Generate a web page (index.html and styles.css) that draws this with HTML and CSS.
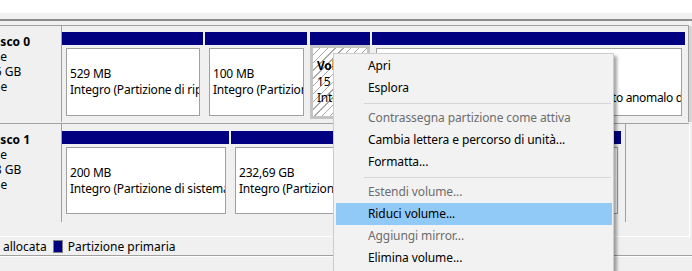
FILE: index.html
```html
<!DOCTYPE html>
<html lang="it">
<head>
    <meta charset="UTF-8">
    <title>Gestione disco</title>
    <link rel="stylesheet" href="styles.css">
</head>
<body>
    <div class="list-pane"></div>
    <div class="splitter"></div>

    <div class="graph">
        <div class="disk disk-0">
            <div class="disk-label">
                <div class="l-name">Disco 0</div>
                <div class="l-type">Base</div>
                <div class="l-size">465,76 GB</div>
                <div class="l-state">Online</div>
            </div>
            <div class="parts">
                <div class="part p-recovery">
                    <div class="part-head"></div>
                    <div class="part-body">
                        <div class="part-box">
                            <div>529 MB</div>
                            <div>Integro (Partizione di ripristino)</div>
                        </div>
                    </div>
                </div>
                <div class="part p-efi">
                    <div class="part-head"></div>
                    <div class="part-body">
                        <div class="part-box">
                            <div>100 MB</div>
                            <div>Integro (Partizione di sistema EFI)</div>
                        </div>
                    </div>
                </div>
                <div class="part p-volume selected">
                    <div class="part-head"></div>
                    <div class="part-body">
                        <div class="part-box">
                            <div class="vol-name">Volume (D:)</div>
                            <div>15 GB NTFS</div>
                            <div>Integro (Partizione primaria)</div>
                        </div>
                    </div>
                </div>
                <div class="part p-system">
                    <div class="part-head"></div>
                    <div class="part-body">
                        <div class="part-box">
                            <div class="vol-name">(C:)</div>
                            <div>450,14 GB NTFS</div>
                            <div>Integro (Avvio, File di paging, Dump di arresto anomalo del sistema)</div>
                        </div>
                    </div>
                </div>
                <div class="edge"></div>
            </div>
        </div>

        <div class="disk disk-1">
            <div class="disk-label">
                <div class="l-name">Disco 1</div>
                <div class="l-type">Base</div>
                <div class="l-size">232,88 GB</div>
                <div class="l-state">Online</div>
            </div>
            <div class="parts parts-short">
                <div class="part p-sysres">
                    <div class="part-head"></div>
                    <div class="part-body">
                        <div class="part-box">
                            <div>200 MB</div>
                            <div>Integro (Partizione di sistema)</div>
                        </div>
                    </div>
                </div>
                <div class="part p-data">
                    <div class="part-head"></div>
                    <div class="part-body">
                        <div class="part-box">
                            <div>232,69 GB</div>
                            <div>Integro (Partizione primaria)</div>
                        </div>
                    </div>
                </div>
            </div>
        </div>
    </div>

    <div class="legend">
        <span class="legend-text l-free">Non allocata</span>
        <span class="swatch"></span>
        <span class="legend-text">Partizione primaria</span>
    </div>
    <div class="status"></div>

    <ul class="menu">
        <li>Apri</li>
        <li>Esplora</li>
        <li class="sep"></li>
        <li class="off">Contrassegna partizione come attiva</li>
        <li>Cambia lettera e percorso di unità...</li>
        <li>Formatta...</li>
        <li class="sep"></li>
        <li class="off">Estendi volume...</li>
        <li class="hot">Riduci volume...</li>
        <li class="off">Aggiungi mirror...</li>
        <li>Elimina volume...</li>
    </ul>
</body>
</html>
```

FILE: styles.css
```css
body {
    margin: 0;
    width: 692px;
    height: 271px;
    overflow: hidden;
    position: relative;
    background-color: #f0f0f0;
    font-family: "Noto Sans", "Open Sans", sans-serif;
    font-size: 12px;
    color: #000;
}

.list-pane {
    height: 13px;
    background: #fff;
}

.splitter {
    height: 6px;
    background: #f0f0f0;
    border-bottom: 2px solid #8c8c8c;
}

.graph {
    padding-top: 4px;
    border-right: 1px solid #fff;
    border-bottom: 1px solid #fff;
    width: 689px;
    height: 211px;
}

.disk {
    display: flex;
    border-top: 1px solid #a0a0a0;
}

.disk-1 {
    margin-top: 1px;
}

.disk-label {
    width: 62px;
    flex-shrink: 0;
    overflow: hidden;
    white-space: nowrap;
    line-height: 15px;
    padding-top: 8px;
    border-right: 1px solid #a0a0a0;
    box-sizing: border-box;
}

.disk-0 .disk-label {
    height: 96px;
}

.disk-1 .disk-label {
    height: 98px;
}

.l-name {
    font-weight: bold;
    margin-left: -12px;
}

.l-type {
    margin-left: -20px;
}

.l-size {
    margin-left: -36px;
}

.l-state {
    margin-left: -30px;
}

.parts {
    display: flex;
    gap: 2px;
    padding: 6px 0 3px;
}

.disk-1 .parts {
    padding-top: 7px;
    padding-bottom: 0;
}

.part {
    display: flex;
    flex-direction: column;
}

.part-head {
    height: 13px;
    background: #000080;
}

.part-body {
    padding: 3px 3px 3px 4px;
    height: 74px;
    box-sizing: border-box;
}

.disk-1 .part-body {
    height: 73px;
}

.part-box {
    height: 100%;
    box-sizing: border-box;
    background: #fff;
    border: 1px solid #a0a0a0;
    padding-left: 3px;
    display: flex;
    flex-direction: column;
    justify-content: center;
    overflow: hidden;
    white-space: nowrap;
    line-height: 16px;
    letter-spacing: -0.2px;
}

.vol-name {
    font-weight: bold;
}

.p-recovery { width: 141px; }
.p-efi { width: 102px; margin-right: 1px; }
.p-volume { width: 60px; }
.p-system { width: 313px; }
.p-sysres { width: 167px; }
.p-data { width: 390px; }

.p-system .part-box {
    letter-spacing: -0.34px;
}

.selected .part-body {
    padding: 0;
    border: 3px solid #c4c4c4;
}

.selected .part-box {
    border: none;
    padding-left: 4px;
    background: repeating-linear-gradient(135deg, #fff 0 4.5px, #a8a8a8 4.5px 5.5px);
}

.edge {
    width: 4px;
    margin-left: 1px;
    margin-top: -6px;
    margin-bottom: -3px;
    border-left: 1px solid #a0a0a0;
    background: #d4d4d4;
}

.parts-short {
    border-right: 1px solid #a0a0a0;
    padding-right: 4px;
}

.legend {
    height: 18px;
    display: flex;
    align-items: center;
    gap: 5px;
    border-bottom: 1px solid #a0a0a0;
    white-space: nowrap;
}

.l-free {
    margin-left: -24px;
}

.swatch {
    width: 8px;
    height: 11px;
    background: #000080;
    border: 1px solid #808080;
    margin-left: 1px;
}

.status {
    height: 14px;
    border-top: 1px solid #fff;
}

.menu {
    position: absolute;
    left: 333px;
    top: 53px;
    width: 281px;
    box-sizing: border-box;
    margin: 0;
    padding: 1px 1px 2px 2px;
    list-style: none;
    background: #f2f2f2;
    border: 1px solid #ccc;
    box-shadow: 3px 3px 3px rgba(0, 0, 0, 0.35);
    letter-spacing: -0.1px;
}

.menu li {
    height: 22px;
    line-height: 22px;
    padding-left: 32px;
    white-space: nowrap;
}

.menu li.sep {
    height: 8px;
    padding: 0;
    margin-left: 28px;
    position: relative;
}

.menu li.sep::after {
    content: "";
    position: absolute;
    left: 0;
    right: 1px;
    top: 4px;
    border-top: 1px solid #d7d7d7;
}

.menu li.off {
    color: #6d6d6d;
}

.menu li.hot {
    background: #91c9f7;
}
```
